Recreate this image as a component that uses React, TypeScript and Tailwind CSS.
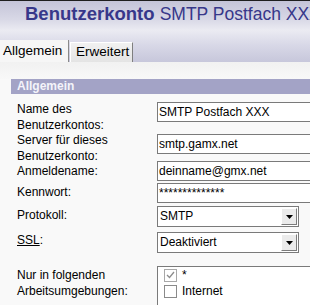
import React from 'react';

const font = "font-['Liberation_Sans',Arial,sans-serif]";

function TextBox({ value, className = '' }: { value: string; className?: string }) {
  return (
    <div
      className={`h-[20px] w-[170px] shrink-0 border border-[#7a7a7a] bg-white px-[1px] text-[12px] leading-[18px] text-black whitespace-nowrap overflow-hidden ${className}`}
    >
      {value}
    </div>
  );
}

function SelectBox({ value, className = '' }: { value: string; className?: string }) {
  return (
    <div
      className={`flex h-[21px] w-[142px] shrink-0 items-stretch border border-[#7a7a7a] bg-white ${className}`}
    >
      <span className="flex-1 px-[2px] text-[12px] leading-[19px] text-black">{value}</span>
      <span className="my-[1px] mr-[1px] flex w-[16px] items-center justify-center border-t border-l border-t-white border-l-white border-b border-r border-b-[#7c7c7c] border-r-[#7c7c7c] bg-[#ebebeb]">
        <svg width="7" height="4" viewBox="0 0 7 4">
          <polygon points="0,0 7,0 3.5,4" fill="#000" />
        </svg>
      </span>
    </div>
  );
}

function Check({ checked, label }: { checked?: boolean; label: string }) {
  return (
    <div className="flex h-[16px] items-center">
      <span
        className={`flex h-[13px] w-[13px] items-center justify-center border bg-white ${
          checked ? 'border-[#a8a8a8]' : 'border-[#8a8a8a]'
        }`}
      >
        {checked && (
          <svg width="9" height="8" viewBox="0 0 9 8">
            <polyline points="1,4 3.5,6.5 8,1" fill="none" stroke="#8c8c8c" strokeWidth="1.3" />
          </svg>
        )}
      </span>
      <span className="ml-[5px] text-[12px] leading-[16px] text-black">{label}</span>
    </div>
  );
}

export default function App() {
  return (
    <div className={`h-[305px] w-[310px] overflow-hidden bg-[#f9f9f9] ${font}`}>
      {/* header with title and tabs */}
      <div className="h-[62px] border-t border-[#1e1e1e] bg-[linear-gradient(180deg,#c4c4d8_0%,#d8d8e6_30%,#ebebf2_48%,#d8d8e7_72%,#c7c7db_100%)]">
        <div className="h-[39px] whitespace-nowrap pl-[25px] pt-[2px] text-[18.5px] leading-[22px] text-[#37378a]">
          <span className="font-bold">Benutzerkonto</span>{' '}
          <span className="text-[17.5px]">SMTP Postfach XXX</span>
        </div>
        <div className="flex h-[22px] items-end">
          <div className="h-[22px] w-[69px] border-r border-[#8a8a8a] bg-[#f6f6f6] pl-[3px] pt-[3px] text-[13.5px] leading-[16px] text-black">
            Allgemein
          </div>
          <div className="ml-[1px] h-[20px] w-[63px] border-t border-l border-white border-r border-r-[#7f7f7f] bg-[linear-gradient(180deg,#f1f1f1,#e4e4e4)] pl-[5px] pt-[1px] text-[13.5px] leading-[16px] text-black">
            Erweitert
          </div>
        </div>
      </div>

      {/* light band under tabs */}
      <div className="h-[17px] bg-[linear-gradient(180deg,#f1f1f1,#f8f8f8)]" />

      {/* section bar */}
      <div className="ml-[11px] h-[15px] bg-[#a3a3c6] pl-[6px] text-[12px] font-bold leading-[15px] text-[#f4f4fa]">
        Allgemein
      </div>

      {/* form rows */}
      <div className="pt-[7px] pl-[17px] text-[12px] leading-[16px] text-black">
        <div className="flex h-[31px] items-start">
          <div className="w-[140px] shrink-0">
            Name des
            <br />
            Benutzerkontos:
          </div>
          <TextBox value="SMTP Postfach XXX" className="mt-[1px]" />
        </div>

        <div className="flex h-[29px] items-start">
          <div className="w-[140px] shrink-0">
            Server für dieses
            <br />
            Benutzerkonto:
          </div>
          <TextBox value="smtp.gamx.net" className="mt-[2px]" />
        </div>

        <div className="flex h-[22px] items-start">
          <div className="w-[140px] shrink-0 pt-[2px]">Anmeldename:</div>
          <TextBox value="deinname@gmx.net" />
        </div>

        <div className="flex h-[23px] items-start">
          <div className="w-[140px] shrink-0 pt-[1px]">Kennwort:</div>
          <TextBox value="**************" className="h-[19px] leading-[17px]" />
        </div>

        <div className="flex h-[26px] items-start">
          <div className="w-[140px] shrink-0 pt-[1px]">Protokoll:</div>
          <SelectBox value="SMTP" className="h-[20px]" />
        </div>

        <div className="flex h-[34px] items-start">
          <div className="w-[140px] shrink-0">
            <span className="underline">SSL</span>:
          </div>
          <SelectBox value="Deaktiviert" />
        </div>

        <div className="flex items-start">
          <div className="w-[140px] shrink-0 pt-[1px]">
            Nur in folgenden
            <br />
            Arbeitsumgebungen:
          </div>
          <div className="h-[60px] w-[170px] shrink-0 border border-[#7a7a7a] bg-white pl-[6px]">
            <Check checked label="*" />
            <Check label="Internet" />
          </div>
        </div>
      </div>
    </div>
  );
}
